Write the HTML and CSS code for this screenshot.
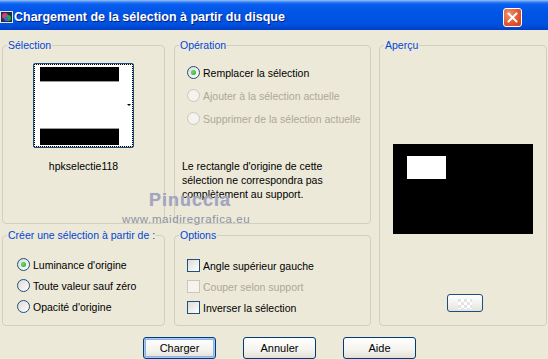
FILE: index.html
```html
<!DOCTYPE html>
<html lang="fr">
<head>
  <meta charset="UTF-8" />
  <title>Chargement de la sélection à partir du disque</title>
  <link rel="stylesheet" href="styles.css">
</head>
<body>
  <div class="window">
    <div class="titlebar">
      <svg class="app-icon" width="13" height="14" viewBox="0 0 13 14">
        <rect x="0.5" y="1.5" width="12" height="11" fill="#2b2b3a" stroke="#dfe6f3"/>
        <circle cx="5" cy="6" r="3" fill="#d63a8a"/>
        <circle cx="8" cy="8" r="3" fill="#2aa44a"/>
        <circle cx="6" cy="9" r="2" fill="#3a63d8"/>
      </svg>
      <span class="title">Chargement de la sélection à partir du disque</span>
      <button class="close">
        <svg width="19" height="19" viewBox="0 0 19 19">
          <path d="M5 5 L14 14 M14 5 L5 14" stroke="#fff" stroke-width="2.2" stroke-linecap="round"/>
        </svg>
      </button>
    </div>

    <div class="content">
      <fieldset class="group g-selection">
        <legend>Sélection</legend>
        <div class="thumb">
          <div class="thumb-focus">
            <svg width="97" height="81" viewBox="0 0 97 81">
              <rect x="0" y="0" width="97" height="81" fill="#fff"/>
              <rect x="5" y="2" width="79" height="14" fill="#000"/>
              <rect x="5" y="16" width="79" height="1" fill="#9a9a9a"/>
              <rect x="5" y="63" width="79" height="1" fill="#9a9a9a"/>
              <rect x="5" y="64" width="79" height="16" fill="#000"/>
              <path d="M92 39 L96 39 L94 41 Z" fill="#000"/>
            </svg>
          </div>
        </div>
        <div class="thumb-name">hpkselectie118</div>
      </fieldset>

      <fieldset class="group g-operation">
        <legend>Opération</legend>
        <label class="opt"><span class="radio checked"></span>Remplacer la sélection</label>
        <label class="opt disabled"><span class="radio"></span>Ajouter à la sélection actuelle</label>
        <label class="opt disabled"><span class="radio"></span>Supprimer de la sélection actuelle</label>
        <p class="note">Le rectangle d'origine de cette sélection ne correspondra pas complètement au support.</p>
      </fieldset>

      <fieldset class="group g-apercu">
        <legend>Aperçu</legend>
        <div class="preview">
          <div class="preview-sel"></div>
        </div>
        <button class="mini-btn"><span class="checker"></span></button>
      </fieldset>

      <fieldset class="group g-create">
        <legend>Créer une sélection à partir de :</legend>
        <label class="opt"><span class="radio checked"></span>Luminance d'origine</label>
        <label class="opt"><span class="radio"></span>Toute valeur sauf zéro</label>
        <label class="opt"><span class="radio"></span>Opacité d'origine</label>
      </fieldset>

      <fieldset class="group g-options">
        <legend>Options</legend>
        <label class="opt"><span class="check"></span>Angle supérieur gauche</label>
        <label class="opt disabled"><span class="check"></span>Couper selon support</label>
        <label class="opt"><span class="check"></span>Inverser la sélection</label>
      </fieldset>
    </div>

    <div class="actions">
      <button class="btn default">Charger</button>
      <button class="btn">Annuler</button>
      <button class="btn">Aide</button>
    </div>

    <div class="watermark">
      <div class="wm-name">Pinuccia</div>
      <div class="wm-url">www.maidiregrafica.eu</div>
    </div>
  </div>
</body>
</html>
```

FILE: styles.css
```css
body {
  margin: 0;
  background: #ece9d8;
  font-family: "Liberation Sans", Arial, sans-serif;
  font-size: 10.5px;
  color: #000;
}
.window {
  position: relative;
  width: 548px;
  height: 359px;
  overflow: hidden;
}
.titlebar {
  height: 30px;
  display: flex;
  align-items: center;
  background: linear-gradient(#9fc2f7 0, #3a86f5 2px, #0a5ef0 4px, #0055e5 12px, #0052e0 24px, #003fc8 30px);
  box-sizing: border-box;
}
.app-icon {
  margin: 3px 1px 0 0;
  flex: none;
}
.title {
  color: #fff;
  font-weight: bold;
  font-size: 12.5px;
  margin-top: 4px;
  text-shadow: 1px 1px 0 #0a1f80;
}
.close {
  margin: 4px 26px 0 auto;
  width: 19px;
  height: 19px;
  padding: 0;
  border: 1px solid #fff;
  border-radius: 3px;
  background: radial-gradient(circle at 30% 30%, #f0916e, #e0542e 60%, #c7401b);
  display: flex;
  align-items: center;
  justify-content: center;
}
.close svg {
  display: block;
}

.content {
  display: grid;
  grid-template-columns: 163px 197px 167px;
  grid-template-rows: 185px 97px;
  column-gap: 9px;
  row-gap: 5px;
  padding: 9px 0 0 2px;
}
.group {
  margin: 0;
  padding: 0;
  border: 1px solid #d0d0bf;
  border-radius: 4px;
  min-width: 0;
}
.group legend {
  color: #0046d5;
  padding: 0 1px;
  margin-left: 4px;
  line-height: 13px;
}
.g-selection { grid-column: 1; grid-row: 1; }
.g-operation { grid-column: 2; grid-row: 1; }
.g-apercu { grid-column: 3; grid-row: 1 / span 2; margin-left: -1px; }
.g-create { grid-column: 1; grid-row: 2; }
.g-options { grid-column: 2; grid-row: 2; }

.thumb {
  width: 99px;
  height: 83px;
  margin: 11px 0 0 30px;
  border: 1px solid #1c4e80;
  border-radius: 2px;
}
.thumb-focus {
  border: 1px dotted #000;
  height: 81px;
  width: 97px;
}
.thumb-focus svg {
  display: block;
}
.thumb-name {
  text-align: center;
  margin-top: 12px;
}

.opt {
  display: flex;
  align-items: center;
  height: 21px;
  white-space: nowrap;
}
.opt.disabled {
  color: #aca899;
}
.radio {
  width: 11px;
  height: 11px;
  border: 1px solid #1c5180;
  border-radius: 50%;
  background: linear-gradient(135deg, #dcdbd4, #fff);
  margin-right: 3px;
  flex: none;
  display: flex;
  align-items: center;
  justify-content: center;
}
.radio.checked::after {
  content: "";
  width: 5px;
  height: 5px;
  border-radius: 50%;
  background: radial-gradient(circle at 40% 40%, #6ee06e, #21a121);
}
.disabled .radio {
  border-color: #cac8bb;
  background: #f4f3ee;
}
.check {
  width: 11px;
  height: 11px;
  border: 1px solid #1c5180;
  background: linear-gradient(135deg, #dcdbd4, #fff);
  margin-right: 3px;
  flex: none;
}
.disabled .check {
  border-color: #cac8bb;
  background: #f4f3ee;
}

.g-operation .opt {
  margin-left: 12px;
  height: 23px;
}
.g-operation .opt:first-of-type {
  margin-top: 9px;
}
.note {
  margin: 29px 0 0 7px;
  line-height: 14px;
  width: 160px;
}

.g-create .opt {
  margin-left: 14px;
}
.g-create .opt:first-of-type {
  margin-top: 12px;
}
.g-options .opt {
  margin-left: 12px;
}
.g-options .opt:first-of-type {
  margin-top: 13px;
}

.preview {
  width: 140px;
  height: 90px;
  background: #000;
  margin: 92px 0 0 13px;
  position: relative;
}
.preview-sel {
  position: absolute;
  left: 14px;
  top: 12px;
  width: 39px;
  height: 23px;
  background: #fff;
}
.mini-btn {
  display: block;
  width: 36px;
  height: 18px;
  margin: 60px 0 0 67px;
  padding: 0;
  border: 1px solid #1c4e80;
  border-radius: 3px;
  background: linear-gradient(#fff, #e6e4da);
}
.checker {
  display: block;
  width: 14px;
  height: 10px;
  margin: 2px auto 0;
  background: conic-gradient(#fff 25%, #e4e4e4 0 50%, #fff 0 75%, #e4e4e4 0);
  background-size: 6px 6px;
}

.actions {
  display: flex;
  gap: 27px;
  padding: 11px 0 0 143px;
}
.btn {
  width: 73px;
  height: 22px;
  padding: 0;
  border: 1px solid #003c74;
  border-radius: 3px;
  background: linear-gradient(#fff, #f4f3ee 60%, #e2e0d6);
  font-family: inherit;
  font-size: 11px;
  color: #000;
}
.btn.default {
  box-shadow: inset 0 0 0 1px #aac6f4, inset 0 0 0 2px #8ab0ee;
}

.watermark {
  position: absolute;
  left: 122px;
  top: 189px;
  width: 126px;
  text-align: center;
  color: #a3a4bd;
  pointer-events: none;
}
.wm-name {
  font-size: 18px;
  font-weight: bold;
  letter-spacing: 1px;
  line-height: 22px;
  padding-left: 10px;
  text-shadow: 0 0 1px #c8c9d8;
}
.wm-url {
  font-size: 11.5px;
  letter-spacing: 0.6px;
  line-height: 14px;
  margin-top: 1px;
  color: #8f90a8;
}
```
